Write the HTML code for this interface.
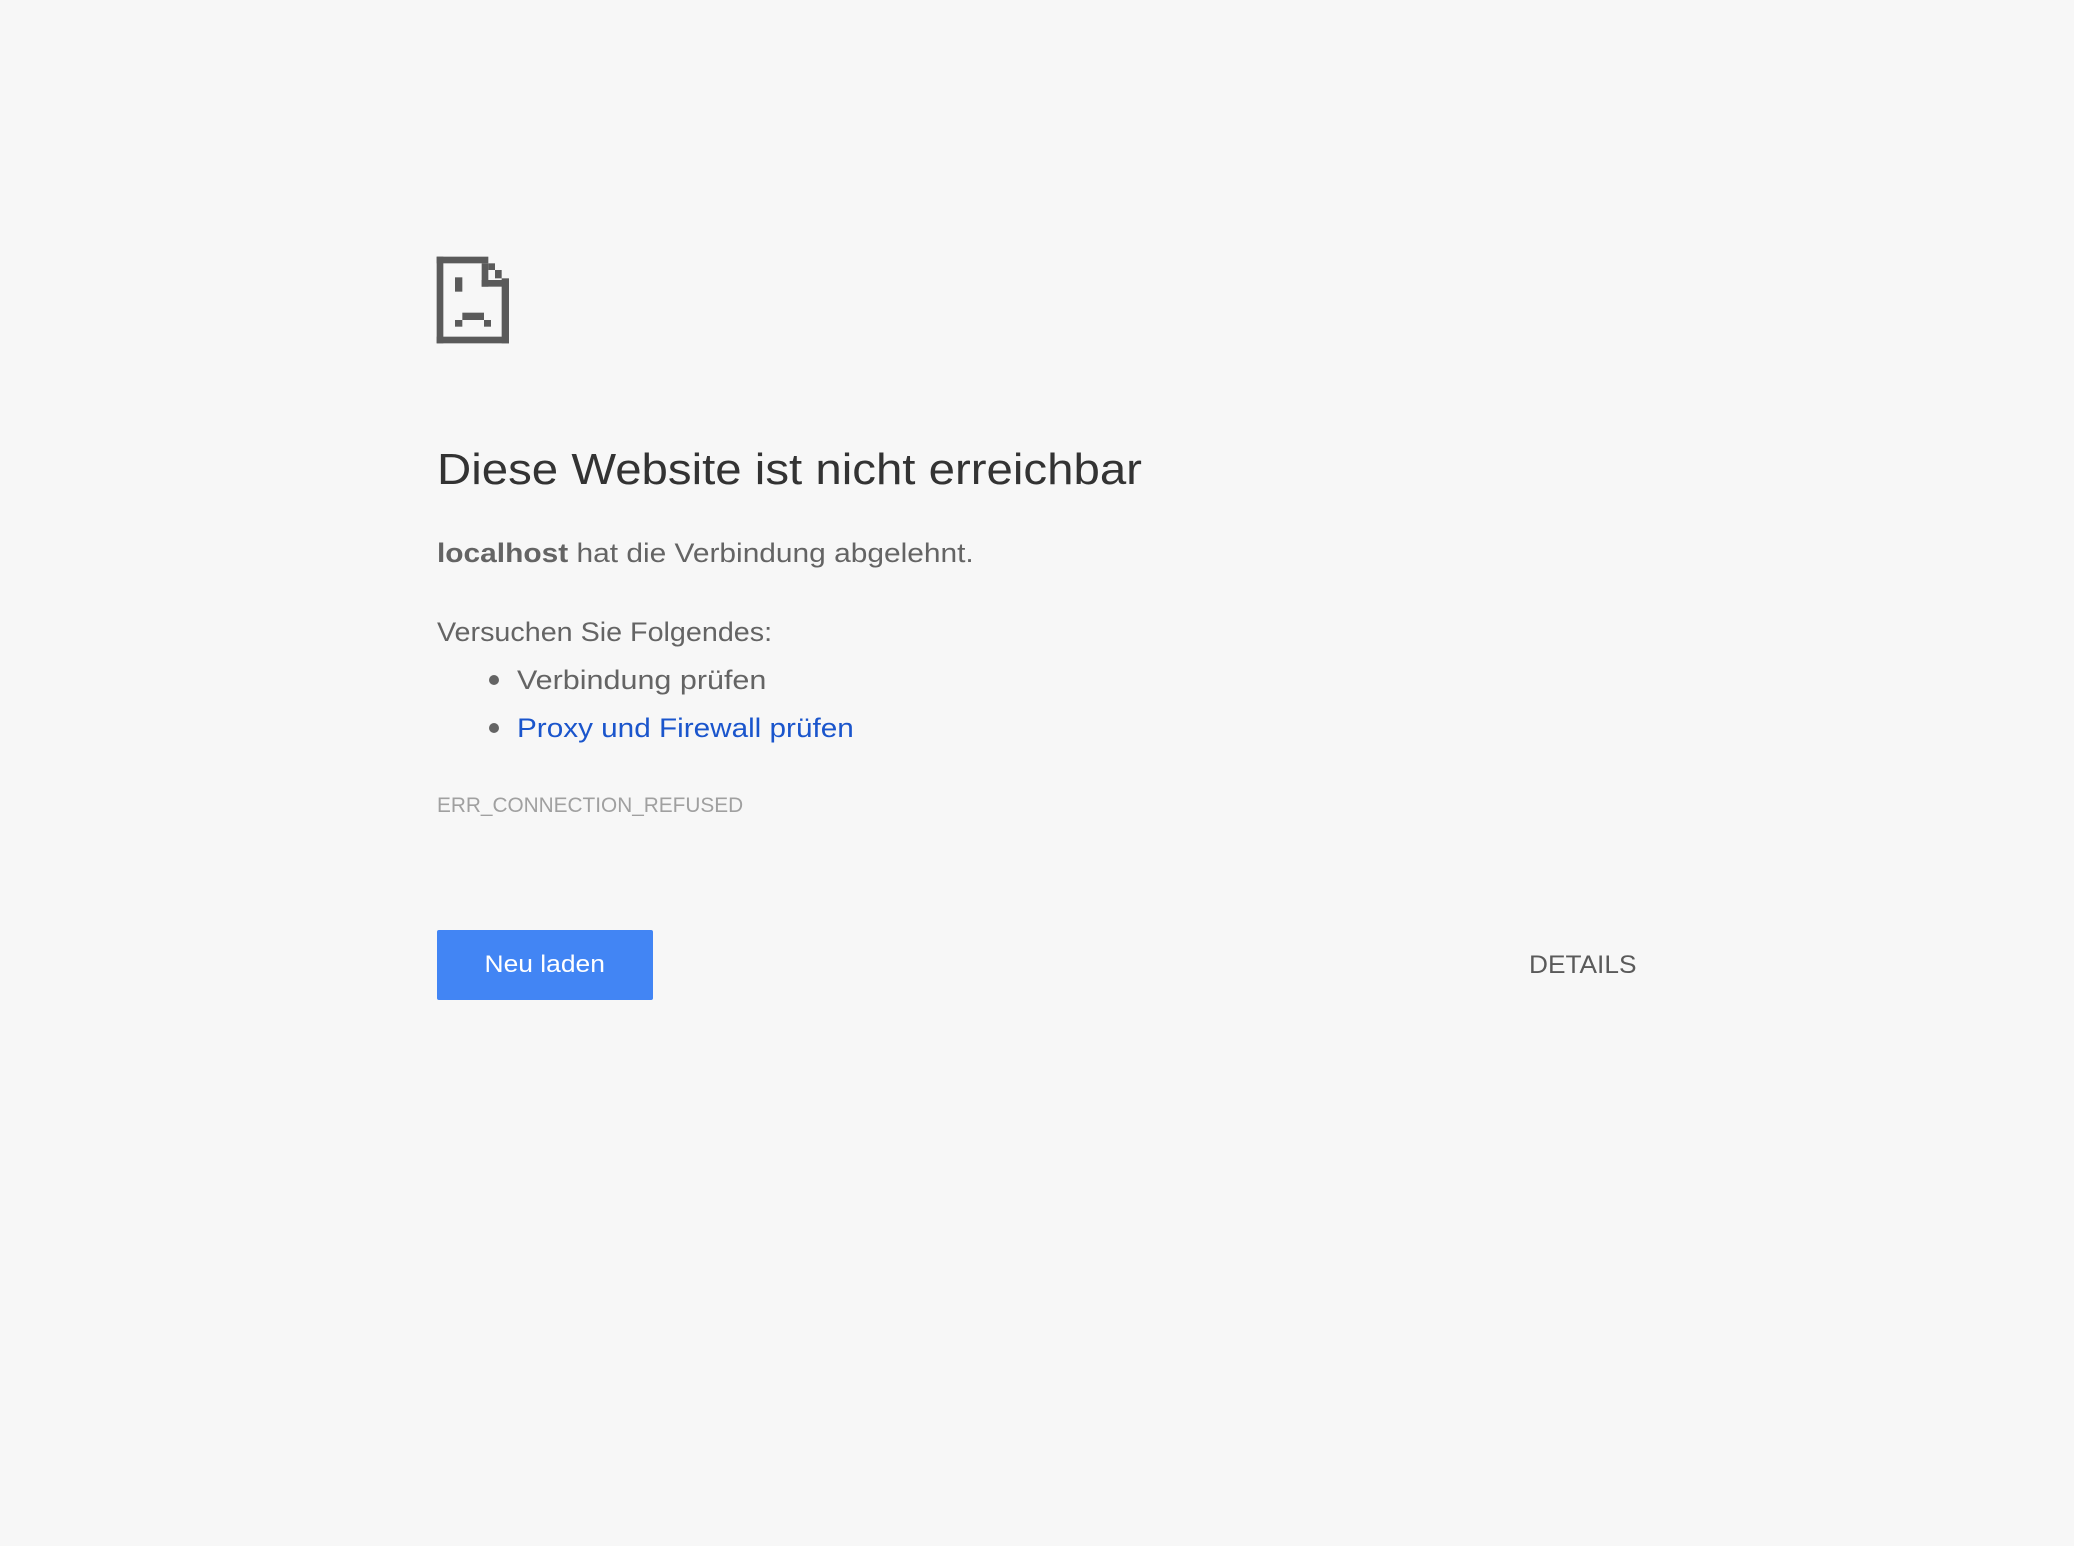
<!DOCTYPE html>
<html><head><meta charset="utf-8"><style>
html,body{margin:0;padding:0;background:#f7f7f7;width:2074px;height:1546px;overflow:hidden;font-family:"Liberation Sans",sans-serif}
.t{position:absolute;line-height:1;white-space:nowrap;transform-origin:0 0}
.d{position:absolute;width:10px;height:10px;border-radius:50%;background:#646464}
</style></head><body>
<svg style="position:absolute;left:430px;top:250px" width="100" height="100" viewBox="0 0 300 300">
<g fill="#5a5a5a">
<rect x="20" y="20" width="20" height="260"/>
<rect x="20" y="20" width="155" height="20"/>
<rect x="175" y="40" width="20" height="20"/>
<rect x="195" y="60" width="20" height="25"/>
<rect x="215" y="85" width="22" height="195"/>
<rect x="20" y="260" width="217" height="20"/>
<rect x="155" y="40" width="20" height="70"/>
<rect x="155" y="90" width="82" height="20"/>
<rect x="75" y="82" width="22" height="43"/>
<rect x="97" y="188" width="65" height="22"/>
<rect x="75" y="210" width="22" height="20"/>
<rect x="162" y="210" width="21" height="20"/>
</g></svg>
<div class="t" style="left:437px;top:448px;font-size:44px;color:#333;transform:scaleX(1.077)">Diese Website ist nicht erreichbar</div>
<div class="t" style="left:437px;top:540px;font-size:27px;color:#646464;transform:scaleX(1.107)"><b>localhost</b> hat die Verbindung abgelehnt.</div>
<div class="t" style="left:437px;top:619px;font-size:27px;color:#646464;transform:scaleX(1.063)">Versuchen Sie Folgendes:</div>
<div class="d" style="left:489px;top:675px"></div>
<div class="t" style="left:517px;top:667px;font-size:27px;color:#646464;transform:scaleX(1.13)">Verbindung prüfen</div>
<div class="d" style="left:489px;top:723px"></div>
<div class="t" style="left:517px;top:715px;font-size:27px;color:#1a55cc;transform:scaleX(1.10)">Proxy und Firewall prüfen</div>
<div class="t" style="left:437px;top:795px;font-size:21px;color:#a0a0a0;transform:scaleX(0.99)">ERR_CONNECTION_REFUSED</div>
<div style="position:absolute;left:437px;top:930px;width:216px;height:70px;background:#4285f4;border-radius:2px;color:#fff;font-size:24px;line-height:70px;text-align:center"><span style="display:inline-block;transform:scaleX(1.1)">Neu laden</span></div>
<div class="t" style="left:1529px;top:953px;font-size:25px;color:#5a5a5a;transform:scaleX(1.05)">DETAILS</div>
</body></html>
